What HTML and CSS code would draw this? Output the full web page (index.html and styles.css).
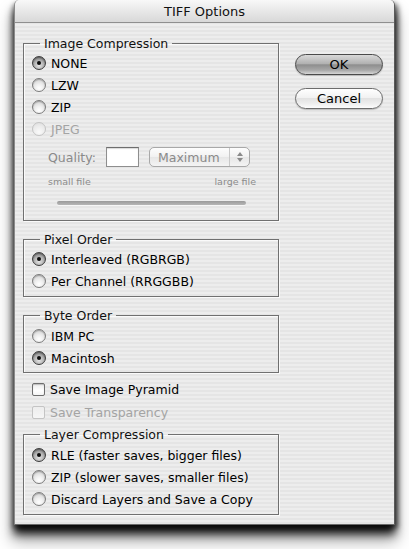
FILE: index.html
```html
<!DOCTYPE html>
<html>
<head>
<meta charset="utf-8">
<link rel="stylesheet" href="styles.css">
</head>
<body>
<div class="window">
  <div class="titlebar">TIFF Options</div>
  <div class="content">
    <div class="left">
      <fieldset class="group g-image">
        <legend>Image Compression</legend>
        <div class="row"><span class="radio on"></span><span>NONE</span></div>
        <div class="row"><span class="radio"></span><span>LZW</span></div>
        <div class="row"><span class="radio"></span><span>ZIP</span></div>
        <div class="row disabled"><span class="radio"></span><span>JPEG</span></div>
        <div class="quality">
          <span class="q-label">Quality:</span>
          <span class="q-input"></span>
          <span class="popup"><span class="popup-text">Maximum</span><span class="popup-arrows"><span class="up"></span><span class="down"></span></span></span>
        </div>
        <div class="scale"><span>small file</span><span>large file</span></div>
        <div class="track"></div>
      </fieldset>

      <fieldset class="group g-pixel">
        <legend>Pixel Order</legend>
        <div class="row"><span class="radio on"></span><span>Interleaved (RGBRGB)</span></div>
        <div class="row"><span class="radio"></span><span>Per Channel (RRGGBB)</span></div>
      </fieldset>

      <fieldset class="group g-byte">
        <legend>Byte Order</legend>
        <div class="row"><span class="radio"></span><span>IBM PC</span></div>
        <div class="row"><span class="radio on"></span><span>Macintosh</span></div>
      </fieldset>

      <div class="checks">
        <div class="row crow"><span class="check"></span><span>Save Image Pyramid</span></div>
        <div class="row crow disabled"><span class="check"></span><span>Save Transparency</span></div>
      </div>

      <fieldset class="group g-layer">
        <legend>Layer Compression</legend>
        <div class="row"><span class="radio on"></span><span>RLE (faster saves, bigger files)</span></div>
        <div class="row"><span class="radio"></span><span>ZIP (slower saves, smaller files)</span></div>
        <div class="row"><span class="radio"></span><span>Discard Layers and Save a Copy</span></div>
      </fieldset>
    </div>
    <div class="buttons">
      <div class="btn default">OK</div>
      <div class="btn">Cancel</div>
    </div>
  </div>
</div>
</body>
</html>
```

FILE: styles.css
```css
html, body {
  margin: 0;
  padding: 0;
  background: #ffffff;
}
body {
  font-family: "DejaVu Sans", "Liberation Sans", sans-serif;
  font-size: 12px;
  color: #000;
  height: 549px;
}
.window {
  margin-left: 14px;
  width: 381px;
  height: 525px;
  box-sizing: border-box;
  border-left: 1px solid #8a8a8a;
  border-right: 1px solid #5a5a5a;
  border-bottom: 1px solid #6a6a6a;
  border-radius: 5px 5px 0 0;
  background: repeating-linear-gradient(to bottom, #ededed 0 2px, #e5e5e5 2px 4px);
  box-shadow: 0 9px 9px 0 rgba(0,0,0,0.85), 0 14px 16px 2px rgba(0,0,0,0.35), 3px 3px 5px rgba(0,0,0,0.5), -2px 3px 4px rgba(0,0,0,0.3);
  display: flex;
  flex-direction: column;
  overflow: hidden;
}
.titlebar {
  height: 22px;
  border-bottom: 1px solid #8f8f8f;
  border-radius: 5px 5px 0 0;
  background: linear-gradient(to bottom, #f8f8f8 0%, #e8e8e8 50%, #d8d8d8 100%);
  text-align: center;
  font-size: 13px;
  line-height: 23px;
  color: #111;
}
.content {
  display: flex;
  padding: 13px 10px 0 8px;
}
.left {
  width: 256px;
  display: flex;
  flex-direction: column;
}
.group {
  margin: 0;
  padding: 0 8px 4px 8px;
  min-width: 0;
  border: 1px solid #707070;
  box-shadow: 1px 1px 0 #fafafa, inset 1px 1px 0 #fafafa;
}
.group legend {
  margin-left: 8px;
  padding: 0 4px;
  line-height: 15px;
  font-size: 12.5px;
  color: #111;
}
.g-image { padding-top: 1px; }
.g-pixel { margin-top: 11px; padding-top: 1px; }
.g-byte { margin-top: 11px; padding-top: 2px; padding-bottom: 3px; }
.g-layer { margin-top: 4px; padding-top: 2px; }

.row {
  display: flex;
  align-items: center;
  height: 22px;
  gap: 5px;
  white-space: nowrap;
  font-size: 12.5px;
}
.row.disabled { color: #a4a4a4; }

.radio {
  width: 14px;
  height: 14px;
  flex: none;
  box-sizing: border-box;
  border-radius: 50%;
  border: 1px solid #7c7c7c;
  background: radial-gradient(circle at 50% 75%, #ffffff 0%, #f0f0f0 35%, #c8c8c8 100%);
  box-shadow: inset 0 1px 1px rgba(0,0,0,0.25);
  position: relative;
}
.radio.on {
  border-color: #3c3c3c;
  background: radial-gradient(circle at 50% 70%, #e6e6e6 0%, #b4b4b4 45%, #5c5c5c 100%);
}
.radio.on::after {
  content: "";
  position: absolute;
  left: 4px;
  top: 4px;
  width: 4px;
  height: 4px;
  border-radius: 50%;
  background: #0c0c0c;
}
.disabled .radio {
  border-color: #c4c4c4;
  background: radial-gradient(circle at 50% 75%, #fafafa 0%, #eaeaea 60%, #dadada 100%);
  box-shadow: none;
}

.quality {
  display: flex;
  align-items: center;
  height: 20px;
  margin-top: 7px;
  margin-left: 16px;
  color: #8a8a8a;
  font-size: 12.5px;
}
.q-label { width: 58px; }
.q-input {
  width: 33px;
  height: 20px;
  box-sizing: border-box;
  background: #fff;
  border: 1px solid #8e8e8e;
  border-top-color: #6e6e6e;
  box-shadow: inset 0 1px 1px rgba(0,0,0,0.15);
}
.popup {
  margin-left: 10px;
  width: 101px;
  height: 20px;
  box-sizing: border-box;
  border: 1px solid #a8a8a8;
  border-radius: 5px;
  background: linear-gradient(to bottom, #fdfdfd 0%, #f1f1f1 50%, #e6e6e6 51%, #f4f4f4 100%);
  display: flex;
  align-items: center;
}
.popup-text {
  flex: 1;
  padding-left: 8px;
  color: #8a8a8a;
}
.popup-arrows {
  width: 19px;
  height: 18px;
  border-left: 1px solid #c8c8c8;
  display: flex;
  flex-direction: column;
  align-items: center;
  justify-content: center;
  gap: 2px;
}
.up, .down {
  width: 0;
  height: 0;
  border-left: 3px solid transparent;
  border-right: 3px solid transparent;
}
.up { border-bottom: 4px solid #8a8a8a; }
.down { border-top: 4px solid #8a8a8a; }

.scale {
  display: flex;
  justify-content: space-between;
  margin: 9px 14px 0 16px;
  font-size: 9.5px;
  line-height: 12px;
  color: #8c8c8c;
}
.track {
  margin: 13px 0 11px 25px;
  width: 189px;
  height: 4px;
  border-radius: 2px;
  background: linear-gradient(to bottom, #9a9a9a, #b6b6b6);
  box-shadow: 0 1px 0 #f6f6f6;
}

.checks {
  margin-top: 5px;
  display: flex;
  flex-direction: column;
  gap: 1px;
  padding-left: 9px;
}
.crow { gap: 5px; }
.check {
  width: 13px;
  height: 13px;
  flex: none;
  box-sizing: border-box;
  border: 1px solid #6e6e6e;
  border-radius: 2px;
  background: linear-gradient(to bottom, #ececec 0%, #ffffff 60%, #f4f4f4 100%);
  box-shadow: inset 0 1px 1px rgba(0,0,0,0.2);
}
.disabled .check {
  border-color: #c4c4c4;
  background: linear-gradient(to bottom, #ededed, #f6f6f6);
  box-shadow: none;
}

.buttons {
  margin-left: 16px;
  margin-top: 18px;
  width: 88px;
  display: flex;
  flex-direction: column;
  gap: 13px;
}
.btn {
  height: 21px;
  box-sizing: border-box;
  border: 1px solid #6c6c6c;
  border-radius: 11px;
  text-align: center;
  font-size: 13px;
  line-height: 19px;
  background: linear-gradient(to bottom, #ffffff 0%, #f2f2f2 45%, #e2e2e2 50%, #f0f0f0 80%, #fdfdfd 100%);
  box-shadow: 0 1px 1px rgba(0,0,0,0.2);
}
.btn.default {
  border-color: #4a4a4a;
  background: linear-gradient(to bottom, #d8d8d8 0%, #b2b2b2 45%, #8e8e8e 52%, #a8a8a8 80%, #d6d6d6 100%);
}
```
